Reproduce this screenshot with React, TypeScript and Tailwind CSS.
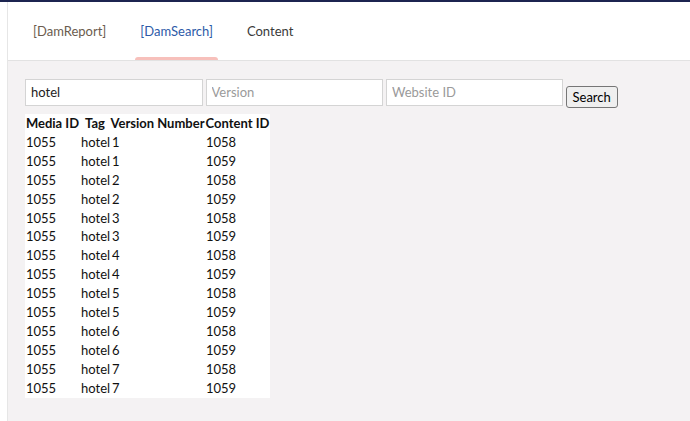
import { useState } from 'react'

const rows = [
  ['1055', 'hotel', '1', '1058'],
  ['1055', 'hotel', '1', '1059'],
  ['1055', 'hotel', '2', '1058'],
  ['1055', 'hotel', '2', '1059'],
  ['1055', 'hotel', '3', '1058'],
  ['1055', 'hotel', '3', '1059'],
  ['1055', 'hotel', '4', '1058'],
  ['1055', 'hotel', '4', '1059'],
  ['1055', 'hotel', '5', '1058'],
  ['1055', 'hotel', '5', '1059'],
  ['1055', 'hotel', '6', '1058'],
  ['1055', 'hotel', '6', '1059'],
  ['1055', 'hotel', '7', '1058'],
  ['1055', 'hotel', '7', '1059'],
]

export default function App() {
  const [tag, setTag] = useState('hotel')
  const [version, setVersion] = useState('')
  const [site, setSite] = useState('')

  return (
    <div className="min-h-screen flex flex-col bg-white border-t-2 border-[#1c2450] font-['Lato','Liberation_Sans',sans-serif] text-[13px]">
      <div className="flex flex-1">
        <div className="w-[7px] bg-white" />
        <div className="flex-1 flex flex-col border-l border-[#e6e6e6]">
          <nav className="h-[59px] flex gap-[24px] pl-[20px] pt-[2px] bg-white border-b border-[#e2e2e2]">
            <a className="relative flex items-center px-[5px] text-[#6b5c4e]">[DamReport]</a>
            <a className="relative flex items-center px-[5px] text-[#2d5aa8]">
              [DamSearch]
              <span className="absolute left-0 right-0 bottom-0 h-[3px] rounded-t-[3px] bg-[#f7c0bb]" />
            </a>
            <a className="relative flex items-center px-[5px] text-[#3a3a3a]">Content</a>
          </nav>

          <div className="flex-1 bg-[#f4f2f3] pt-[18px] pl-[17px]">
            <div className="flex items-start gap-[3px]">
              <input
                value={tag}
                onChange={e => setTag(e.target.value)}
                className="w-[177.5px] h-[27px] bg-white border border-[#d4d4d4] px-[5px] pb-[1px] text-[#222] outline-none"
              />
              <input
                value={version}
                placeholder="Version"
                onChange={e => setVersion(e.target.value)}
                className="w-[177.5px] h-[27px] bg-white border border-[#d4d4d4] px-[5px] pb-[1px] text-[#222] placeholder:text-[#9a9a9a] outline-none"
              />
              <input
                value={site}
                placeholder="Website ID"
                onChange={e => setSite(e.target.value)}
                className="w-[176.5px] h-[27px] bg-white border border-[#d4d4d4] px-[5px] pb-[1px] text-[#222] placeholder:text-[#9a9a9a] outline-none"
              />
              <button className="mt-[7px] h-[22px] px-[6px] bg-[#efefef] border border-[#767676] rounded-[3px] text-black text-[13px] leading-none">
                Search
              </button>
            </div>

            <table className="mt-[6px] bg-white text-[#111] border-collapse table-fixed w-[245px] leading-[18.9px]">
              <colgroup>
                <col className="w-[55px]" />
                <col className="w-[30px]" />
                <col className="w-[95px]" />
                <col className="w-[65px]" />
              </colgroup>
              <thead>
                <tr>
                  <th className="font-bold text-center p-0 whitespace-nowrap">Media ID</th>
                  <th className="font-bold text-center p-0 whitespace-nowrap">Tag</th>
                  <th className="font-bold text-center p-0 whitespace-nowrap">Version Number</th>
                  <th className="font-bold text-center p-0 whitespace-nowrap">Content ID</th>
                </tr>
              </thead>
              <tbody>
                {rows.map((r, i) => (
                  <tr key={i}>
                    <td className="pl-[1px] py-0">{r[0]}</td>
                    <td className="pl-[1px] py-0">{r[1]}</td>
                    <td className="pl-[2px] py-0">{r[2]}</td>
                    <td className="pl-[1px] py-0">{r[3]}</td>
                  </tr>
                ))}
              </tbody>
            </table>
          </div>
        </div>
      </div>
    </div>
  )
}
